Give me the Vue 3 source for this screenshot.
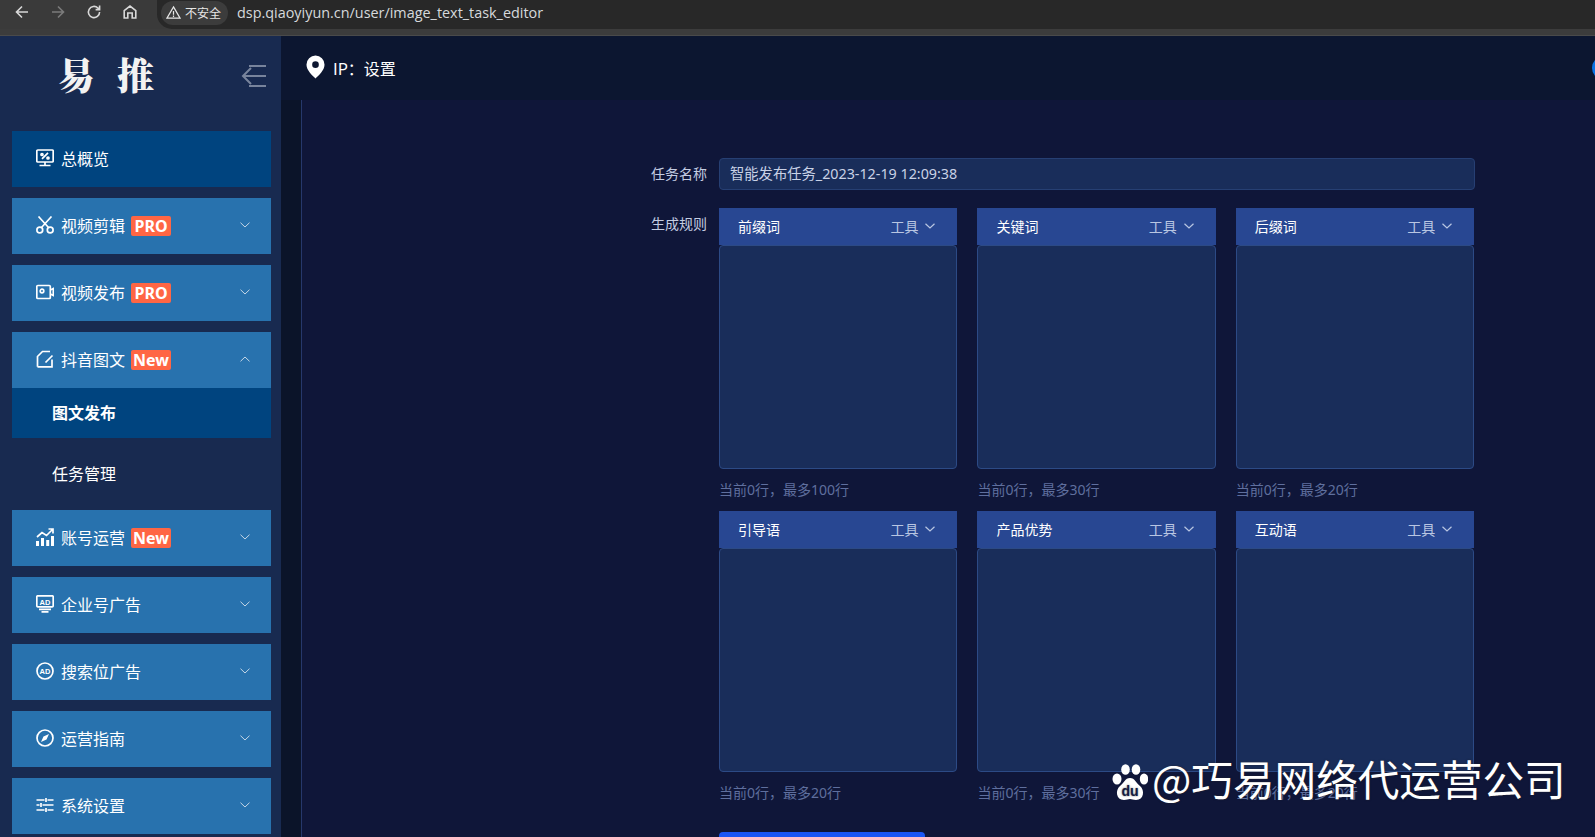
<script setup>
const menu = [
  { name: '总概览', icon: 'overview', active: true },
  { name: '视频剪辑', icon: 'cut', badge: 'PRO', arrow: 'down' },
  { name: '视频发布', icon: 'video', badge: 'PRO', arrow: 'down' },
  { name: '抖音图文', icon: 'note', badge: 'New', arrow: 'up', subs: ['图文发布', '任务管理'] },
  { name: '账号运营', icon: 'chart', badge: 'New', arrow: 'down' },
  { name: '企业号广告', icon: 'adscreen', arrow: 'down' },
  { name: '搜索位广告', icon: 'adcircle', arrow: 'down' },
  { name: '运营指南', icon: 'compass', arrow: 'down' },
  { name: '系统设置', icon: 'sliders', arrow: 'down' },
]
const panels = [
  { name: '前缀词', max: 100 },
  { name: '关键词', max: 30 },
  { name: '后缀词', max: 20 },
  { name: '引导语', max: 20 },
  { name: '产品优势', max: 30 },
  { name: '互动语', max: 20 },
]
</script>

<template>
  <div class="page">
    <div class="browser">
      <div class="tools">
        <svg class="tool" viewBox="0 0 16 16"><path d="M14 8H2.5M8 2.5 2.5 8 8 13.5" /></svg>
        <svg class="tool dim" viewBox="0 0 16 16"><path d="M2 8h11.5M8 2.5 13.5 8 8 13.5" /></svg>
        <svg class="tool" viewBox="0 0 16 16"><path d="M13.6 8a5.6 5.6 0 1 1-1.7-4L13.6 5.6M13.6 1.6v4h-4" /></svg>
        <svg class="tool" viewBox="0 0 16 16"><path d="M2.2 14V6.6L8 2l5.8 4.6V14h-3.6V9H5.8v5z" /></svg>
      </div>
      <div class="address">
        <div class="chip">
          <svg class="warn" viewBox="0 0 16 16"><path d="M8 2 15 14H1zM8 6.5v4M8 11.3v1.4" /></svg>
          <span>不安全</span>
        </div>
        <span class="url">dsp.qiaoyiyun.cn/user/image_text_task_editor</span>
      </div>
    </div>
    <div class="stripe"></div>

    <div class="app">
      <aside class="side">
        <div class="brand">
          <div class="logo"><span>易</span><span>推</span></div>
          <svg class="collapse" viewBox="0 0 26 26"><path d="M8 3h17M2 13h23M8 23h17" /><path d="M10 5 2 13l8 8" /></svg>
        </div>
        <nav class="menu">
          <div v-for="m in menu" :key="m.name" class="group">
            <div class="item" :class="{ active: m.active }">
              <svg class="ico" viewBox="0 0 18 18">
                <g v-if="m.icon === 'overview'">
                  <rect x=".8" y="1" width="16.400" height="12" rx="1" />
                  <path d="M3.500 16.500h11M9 13v3.500M6 9.800l6-6" />
                  <circle cx="6" cy="5.500" r="1" /><circle cx="12" cy="9" r="1" />
                </g>
                <g v-else-if="m.icon === 'cut'">
                  <circle cx="3.800" cy="14" r="2.900" /><circle cx="14.200" cy="14" r="2.900" />
                  <path d="M5.500 11.500 15.500.5M12.500 11.500 2.500.5" />
                </g>
                <g v-else-if="m.icon === 'video'">
                  <rect x=".8" y="2.500" width="13.500" height="13" rx="1" />
                  <circle cx="6" cy="8" r="1.800" />
                  <path d="M14.300 7l3-1.500v7l-3-1.500" />
                </g>
                <g v-else-if="m.icon === 'note'">
                  <path d="M1.500 16.800V6.500L6.500 1.500H14M16 9.500v7.300H1.500" />
                  <path d="M9.500 12.500 16.500 5.500" />
                </g>
                <g v-else-if="m.icon === 'chart'">
                  <path class="solid" d="M0 13h3v5H0zM5 10h3v8H5zM10.200 12h3v6h-3zM15 8h3v10h-3z" />
                  <path d="M1 9 6 4.500l4.500 3L16.500 1.500M12.500 1h4.500v4.500" />
                </g>
                <g v-else-if="m.icon === 'adscreen'">
                  <rect x=".8" y=".8" width="16.400" height="11" rx="1" />
                  <text x="9" y="9.500" class="adt">AD</text>
                  <path d="M3 14.300h12M5.500 16.800h7" />
                </g>
                <g v-else-if="m.icon === 'adcircle'">
                  <circle cx="9" cy="9" r="8" />
                  <text x="9" y="11.600" class="adt">AD</text>
                </g>
                <g v-else-if="m.icon === 'compass'">
                  <circle cx="9" cy="9" r="8" />
                  <path class="solid" d="M13 5 10.500 10.500 5 13l2.500-5.500z" />
                </g>
                <g v-else>
                  <path d="M.5 4h8M11.500 4h6M.5 9h3M6.500 9h11M.5 14h8M11.500 14h6M10 2v4M5 7v4M10 12v4" />
                </g>
              </svg>
              <span class="label">{{ m.name }}</span>
              <span v-if="m.badge" class="badge">{{ m.badge }}</span>
              <svg v-if="m.arrow" class="chev" :class="{ up: m.arrow === 'up' }" viewBox="0 0 10 6"><path d="M.5.700 5 5 9.500.700" /></svg>
            </div>
            <div v-if="m.subs" class="subs">
              <div v-for="(s, i) in m.subs" :key="s" class="sub" :class="{ on: i === 0 }">{{ s }}</div>
            </div>
          </div>
        </nav>
      </aside>

      <main class="main">
        <header class="top">
          <svg class="pin" viewBox="0 0 20 24"><path fill-rule="evenodd" d="M10 0a9.500 9.500 0 0 1 9.500 9.500C19.500 15.500 13 21 10 24 7 21 .5 15.500.5 9.500A9.500 9.500 0 0 1 10 0zm0 6a3.500 3.500 0 1 0 0 7 3.500 3.500 0 0 0 0-7z" /></svg>
          <span class="ip">IP&#xFF1A;设置</span>
          <span class="avatar"></span>
        </header>
        <div class="body">
          <div class="rail"></div>
          <section class="content">
            <div class="row first">
              <label class="lab">任务名称</label>
              <div class="input">智能发布任务_2023-12-19 12:09:38</div>
            </div>
            <div class="row">
              <label class="lab rule">生成规则</label>
              <div class="rules">
                <div class="grid">
                  <div v-for="p in panels" :key="p.name" class="panel">
                    <div class="head">
                      <span class="pname">{{ p.name }}</span>
                      <span class="tool-link">工具</span>
                      <svg class="hchev" viewBox="0 0 10 6"><path d="M.5.700 5 5 9.500.700" /></svg>
                    </div>
                    <div class="box"></div>
                    <div class="note">当前0行&#xFF0C;最多{{ p.max }}行</div>
                  </div>
                </div>
                <div class="submit"></div>
              </div>
            </div>
          </section>
        </div>
      </main>
    </div>

    <div class="watermark">
      <svg class="paw" viewBox="0 0 36 38">
        <ellipse cx="5" cy="15" rx="4.500" ry="5.500" />
        <ellipse cx="13.500" cy="5.500" rx="4.300" ry="5.300" />
        <ellipse cx="24" cy="5.500" rx="4.300" ry="5.300" />
        <ellipse cx="32" cy="15" rx="4.200" ry="5.500" />
        <path d="M18 14c5 0 6 5 10 8 5 4 4 14-4 14-3 0-4-1-6-1s-3 1-6 1c-8 0-9-10-4-14 4-3 5-8 10-8z" />
        <text x="18" y="32" class="du">du</text>
      </svg>
      <span>@巧易网络代运营公司</span>
    </div>
  </div>
</template>

<style>
html, body { margin: 0; background: #0f1639; overflow: hidden; }
</style>

<style scoped>
.page {
  position: relative;
  width: 1595px;
  height: 837px;
  overflow: hidden;
  font-family: "Noto Sans CJK SC", "Noto Sans", sans-serif;
  background: #0f1639;
}
.browser { display: flex; height: 29px; background: #3a3a3a; }
.tools { display: flex; width: 157px; padding-left: 14px; box-sizing: border-box; gap: 20px; padding-top: 4px; }
.tool { width: 16px; height: 16px; fill: none; stroke: #d8d8d8; stroke-width: 1.600; }
.tool.dim { stroke: #7b7b7b; }
.address {
  flex: 1;
  display: flex;
  align-items: center;
  height: 29px;
  padding-left: 4px;
  padding-bottom: 4px;
  box-sizing: border-box;
  background: #282828;
  border-radius: 0 0 0 15px;
}
.chip {
  display: flex;
  align-items: center;
  gap: 4px;
  width: 67px;
  height: 24px;
  margin-right: 9px;
  padding-left: 5px;
  box-sizing: border-box;
  border-radius: 12px;
  background: #3c3c3c;
  color: #e6e6e6;
  font-size: 12px;
}
.warn { width: 15px; height: 15px; fill: none; stroke: #e6e6e6; stroke-width: 1.300; }
.url { color: #d6d9dc; font-family: "Open Sans", sans-serif; font-size: 14.400px; }
.stripe { height: 7px; background: #3c3c3c; border-bottom: 1px solid #4a4a4a; box-sizing: border-box; }

.app { display: flex; height: 801px; }
.side { width: 281px; flex: none; background: #182a50; }
.brand { position: relative; height: 95px; }
.logo {
  position: absolute;
  left: 58px;
  top: 16px;
  display: flex;
  gap: 22px;
  color: #f2f2f2;
  font-size: 37px;
  line-height: 44px;
  font-weight: 900;
  font-family: "Noto Serif CJK SC", "Noto Sans CJK SC", serif;
}
.collapse { position: absolute; left: 241px; top: 27px; width: 26px; height: 26px; fill: none; stroke: #78849c; stroke-width: 2; }
.menu { display: flex; flex-direction: column; gap: 11px; padding: 0 10px 0 12px; }
.item {
  position: relative;
  display: flex;
  align-items: center;
  height: 56px;
  padding-left: 24px;
  padding-bottom: 2px;
  box-sizing: border-box;
  background: #2872ae;
  color: #fff;
  font-size: 16px;
}
.item.active { background: #00447f; }
.ico { width: 18px; height: 18px; margin-right: 7px; flex: none; fill: none; stroke: #fff; stroke-width: 1.700; }
.ico .solid { fill: #fff; stroke: none; }
.ico .adt { fill: #fff; stroke: none; font-size: 7.500px; font-weight: 700; text-anchor: middle; font-family: "Liberation Sans", sans-serif; }
.badge {
  margin-left: 6px;
  margin-top: 2px;
  width: 40px;
  height: 20px;
  border-radius: 2px;
  background: #ff6644;
  color: #fff;
  font-family: "Noto Sans", sans-serif;
  font-size: 16px;
  font-weight: 700;
  line-height: 20px;
  text-align: center;
}
.chev { position: absolute; right: 21px; top: 24px; width: 10px; height: 6px; fill: none; stroke: #c5d6e6; stroke-width: 1; }
.chev.up { transform: rotate(180deg); }
.subs { display: flex; flex-direction: column; gap: 11px; color: #fff; font-size: 16px; }
.sub { height: 50px; line-height: 48px; padding-left: 40px; }
.sub.on { background: #00447f; font-weight: 700; }

.main { flex: 1; min-width: 0; display: flex; flex-direction: column; }
.top { position: relative; display: flex; align-items: center; height: 64px; flex: none; padding-left: 25px; background: #0c1630; color: #fff; }
.pin { width: 19px; height: 24px; fill: #fff; margin-right: 8px; margin-top: -2px; }
.ip { font-size: 16px; font-family: "Noto Sans CJK SC", sans-serif; }
.avatar { position: absolute; left: 1311px; top: 20px; width: 24px; height: 24px; border-radius: 50%; background: #0a74e6; }
.body { flex: 1; display: flex; min-height: 0; }
.rail { width: 20px; flex: none; background: #0b1429; border-right: 1px solid #26386b; }
.content { flex: 1; padding: 58px 0 0 349px; overflow: hidden; }
.row { display: flex; gap: 12px; }
.row.first { margin-bottom: 18px; }
.lab { width: 56px; flex: none; color: #c4cde2; font-size: 14px; line-height: 30px; white-space: nowrap; }
.lab.rule { line-height: 30px; }
.input {
  width: 756px;
  height: 32px;
  box-sizing: border-box;
  padding-left: 10px;
  border: 1px solid #263f73;
  border-radius: 4px;
  background: #192d5a;
  color: #c9d2e6;
  font-family: "Noto Sans", "Noto Sans CJK SC", sans-serif;
  font-size: 14.300px;
  line-height: 29px;
}
.rules { width: 755px; }
.grid { display: grid; grid-template-columns: repeat(3, 238.400px); column-gap: 20px; }
.panel { display: flex; flex-direction: column; height: 303px; }
.head {
  display: flex;
  align-items: center;
  height: 37px;
  flex: none;
  padding: 0 22px 2px 19px;
  box-sizing: border-box;
  background: #284792;
  color: #fff;
  font-size: 14px;
}
.pname { flex: 1; font-weight: 400; }
.tool-link { color: #b9c6e2; }
.hchev { width: 10px; height: 6px; margin-left: 7px; fill: none; stroke: #b9c6e2; stroke-width: 1.200; }
.box { height: 224px; box-sizing: border-box; border: 1px solid #2c4a85; border-radius: 4px; background: #192d5a; }
.note { color: #5f6f9e; font-size: 14px; line-height: 41px; font-family: "Noto Sans", "Noto Sans CJK SC", sans-serif; }
.submit { width: 206px; height: 40px; margin-top: 18px; border-radius: 4px; background: #1a56f5; }

.watermark {
  position: absolute;
  left: 1112px;
  top: 753px;
  display: flex;
  align-items: center;
  gap: 4px;
  color: #fff;
  font-size: 41.600px;
  line-height: 50px;
  white-space: nowrap;
  text-shadow: 0 0 2px rgba(40, 40, 40, .7);
}
.paw { width: 36px; height: 38px; margin-top: 10px; fill: #fff; flex: none; }
.du { fill: #141c42; font-size: 14px; font-weight: 700; text-anchor: middle; font-family: "Liberation Sans", sans-serif; }
</style>
